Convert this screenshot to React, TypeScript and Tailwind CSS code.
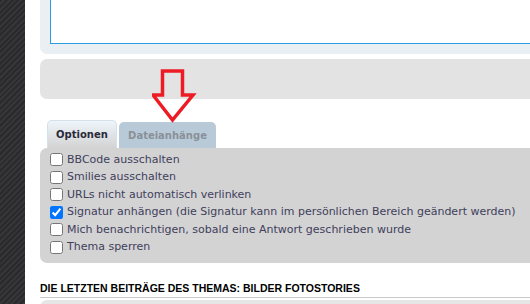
import React from 'react';

const options = [
    { label: 'BBCode ausschalten', checked: false },
    { label: 'Smilies ausschalten', checked: false },
    { label: 'URLs nicht automatisch verlinken', checked: false },
    { label: 'Signatur anhängen (die Signatur kann im persönlichen Bereich geändert werden)', checked: true },
    { label: 'Mich benachrichtigen, sobald eine Antwort geschrieben wurde', checked: false },
    { label: 'Thema sperren', checked: false },
];

const App: React.FC = () => {
    return (
        <div className="w-[530px] h-[304px] overflow-hidden flex bg-white font-['DejaVu_Sans',Verdana,sans-serif]">
            {/* dunkler Rand links */}
            <div className="w-[25px] shrink-0 bg-[repeating-linear-gradient(135deg,#2a2a2c_0px,#2a2a2c_2px,#36363a_2px,#36363a_4px)]" />

            <div className="relative flex-1 pl-[15px] flex flex-col">
                {/* Editor */}
                <div className="shrink-0 -mt-[20px] w-[520px] bg-[#e9eff2] rounded-b-[7px] pl-[10px] pb-[10px]">
                    <div className="h-[64px] bg-white border border-[#2a9de0]" />
                </div>

                <div className="shrink-0 mt-[5px] w-[520px] h-[40px] bg-[#e3e3e3] rounded-[7px]" />

                {/* Tabs */}
                <div className="shrink-0 mt-[21px] flex items-end pl-[7px] gap-[2px] h-[28px]">
                    <div className="h-[28px] w-[70px] rounded-t-[5px] border border-b-0 border-[#d6e0e8] bg-gradient-to-b from-[#eef5fb] to-[#d3d3d3] flex items-center justify-center text-[10px] font-bold text-[#2a2a3a]">
                        Optionen
                    </div>
                    <div className="h-[26px] w-[97px] rounded-t-[5px] bg-[#b8cad8] flex items-center justify-center text-[10px] font-bold text-[#8a9098]">
                        Dateianhänge
                    </div>
                </div>

                {/* Optionen */}
                <div className="shrink-0 w-[520px] h-[115px] bg-[#d3d3d3] rounded-b-[7px] rounded-tl-[7px] pl-[10px] pt-[3px] flex flex-col">
                    {options.map(o => (
                        <label key={o.label} className="shrink-0 h-[17.5px] flex items-center gap-[4px] text-[11px] text-[#40405c] whitespace-nowrap">
                            <input type="checkbox" defaultChecked={o.checked} className="m-0 w-[13px] h-[13px]" />
                            {o.label}
                        </label>
                    ))}
                </div>

                {/* Letzte Beiträge */}
                <div className="shrink-0 mt-[19px] w-[520px] border-b border-[#c8c8c8] pb-[3px] font-['Liberation_Sans',Arial,sans-serif] text-[10.5px] font-bold leading-[12px] text-black">
                    DIE LETZTEN BEITRÄGE DES THEMAS: BILDER FOTOSTORIES
                </div>
                <div className="shrink-0 mt-[2px] w-[520px] h-[20px] bg-[#e6e6e6] rounded-tl-[7px]" />

                {/* roter Pfeil */}
                <svg className="absolute left-[127px] top-[68px]" width="46" height="56" viewBox="0 0 46 56">
                    <polygon points="10.5,3 30.5,3 30.5,27 41,27 20.5,52 1,27 10.5,27" fill="none" stroke="#ed1c24" strokeWidth="3.5" strokeLinejoin="miter" />
                </svg>
            </div>
        </div>
    );
};

export default App;
